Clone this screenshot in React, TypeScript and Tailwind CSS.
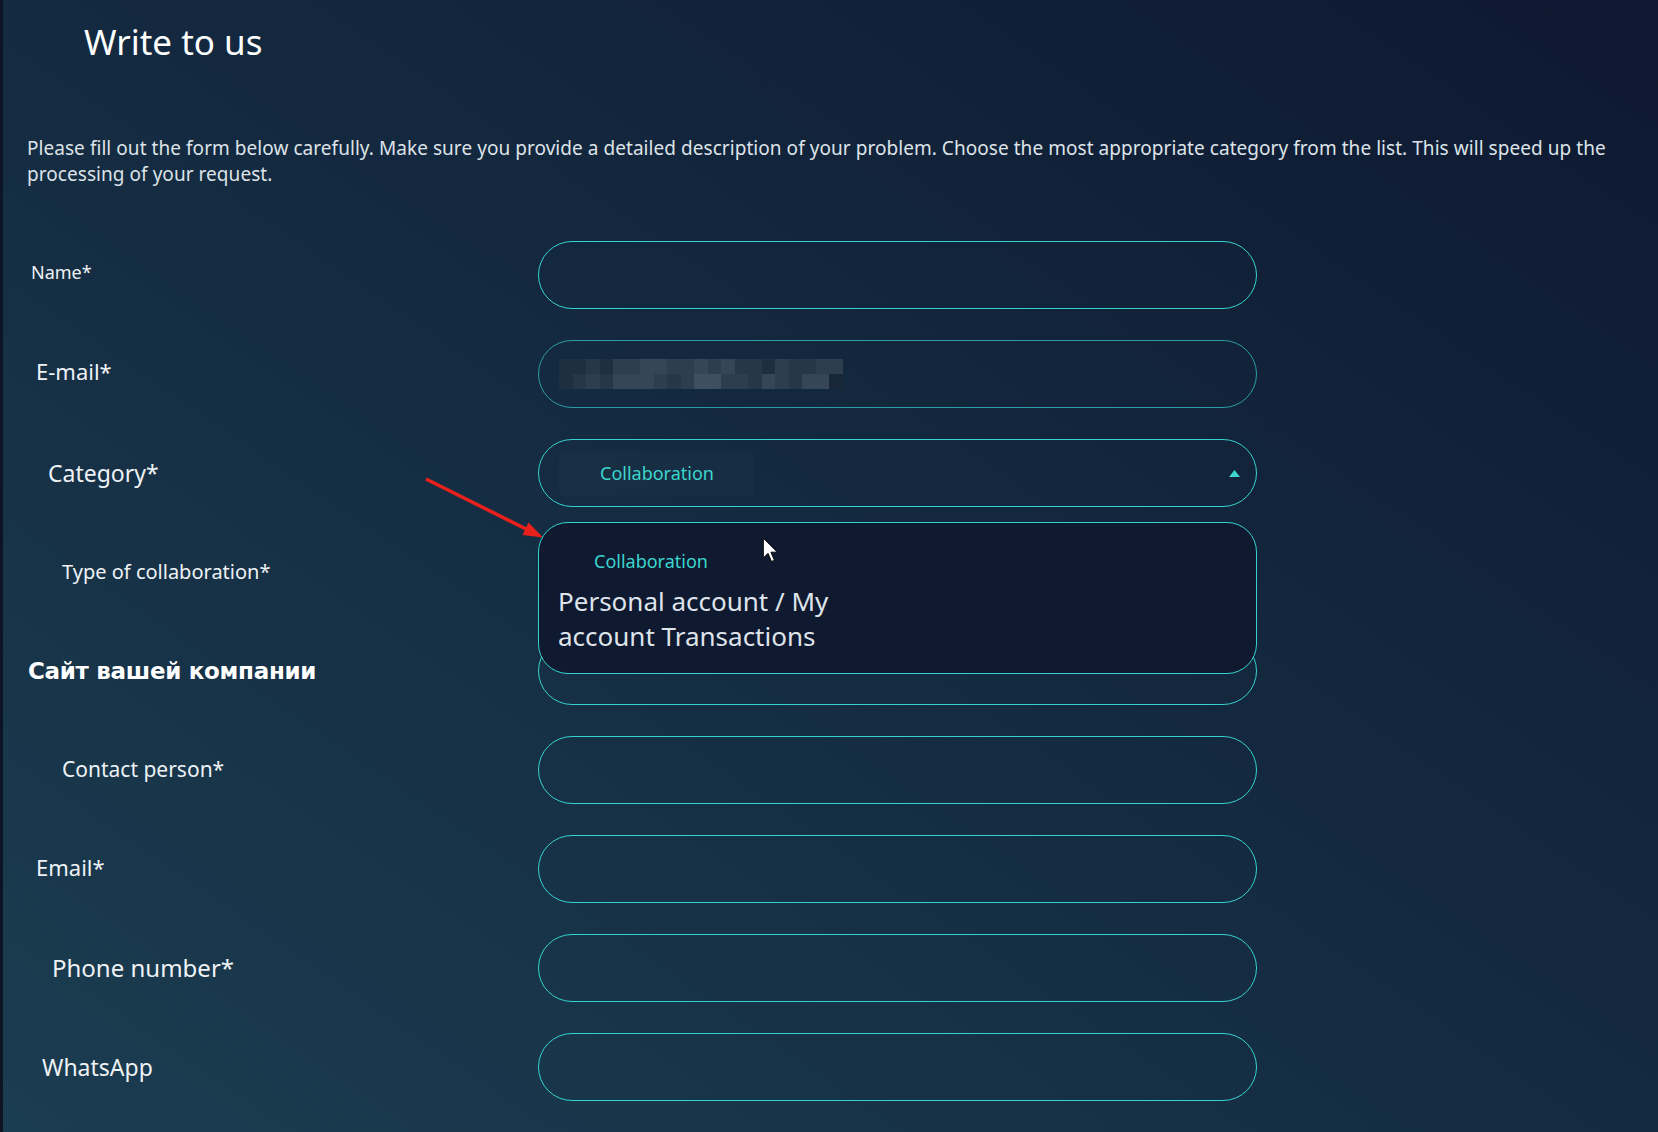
import React from 'react';

type Row = { label: string; cls: string; kind?: 'email' | 'select' };

const rows: Row[] = [
  { label: 'Name*', cls: 'pl-[28px] pb-[6px] text-[18px]' },
  { label: 'E-mail*', cls: 'pl-[33px] pb-[6px] text-[22px]', kind: 'email' },
  { label: 'Category*', cls: 'pl-[45px] text-[23px]', kind: 'select' },
  { label: 'Type of collaboration*', cls: 'pl-[59px] text-[20px]' },
  { label: 'Сайт вашей компании', cls: "pl-[25px] text-[23px] font-bold font-['DejaVu_Sans',sans-serif] tracking-[-0.3px] text-white" },
  { label: 'Contact person*', cls: 'pl-[59px] text-[21px]' },
  { label: 'Email*', cls: 'pl-[33px] pb-[3px] text-[22px]' },
  { label: 'Phone number*', cls: 'pl-[49px] text-[24px]' },
  { label: 'WhatsApp', cls: 'pl-[39px] text-[23px]' },
];

// pixelated (blurred) e-mail value
const shades = ['bg-[#182839]', 'bg-[#1f2f42]', 'bg-[#26374a]', 'bg-[#2d3e51]', 'bg-[#354659]', 'bg-[#3e4f61]'];
const mosaic = [
  [1, 1, 2, 1, 3, 3, 4, 4, 3, 3, 4, 3, 4, 2, 2, 1, 3, 2, 2, 3, 3],
  [1, 2, 3, 2, 4, 4, 4, 3, 2, 3, 5, 5, 3, 3, 2, 4, 3, 2, 4, 4, 0],
];

const BlurredEmail = () => (
  <div className="flex flex-col">
    {mosaic.map((r, i) => (
      <div key={i} className="flex">
        {r.map((s, j) => (
          <div key={j} className={`h-[15px] w-[13.5px] ${shades[s]}`} />
        ))}
      </div>
    ))}
  </div>
);

const Field = ({ kind }: { kind?: Row['kind'] }) => {
  if (kind === 'email') {
    return (
      <div className="flex h-[68px] w-[719px] items-center rounded-[34px] border border-[#2a9ea3] pl-[20px]">
        <BlurredEmail />
      </div>
    );
  }
  if (kind === 'select') {
    return (
      <div className="relative w-[719px]">
        <div className="flex h-[68px] items-center justify-between rounded-[34px] border border-[#35d3cf] pl-[20px] pr-[16px]">
          <div className="flex h-[44px] items-center rounded bg-white/[0.015] pl-[41px] pr-[40px] text-[18px] text-[#3cd6cd]">
            Collaboration
          </div>
          <svg width="11" height="7" viewBox="0 0 11 7">
            <path d="M0 7 L5.5 0 L11 7 Z" fill="#3cd6cd" />
          </svg>
        </div>
        <div className="absolute left-0 top-[83px] z-10 h-[152px] w-full rounded-[30px] border border-[#35d3cf] bg-[#0f1930] pl-[19px] pt-[25px]">
          <div className="pl-[36px] text-[18px] leading-[26px] text-[#3cd6cd]">Collaboration</div>
          <div className="mt-[10px] max-w-[310px] text-[26px] leading-[35px] text-[#dfe4ea]">
            Personal account / My account Transactions
          </div>
        </div>
      </div>
    );
  }
  return <div className="h-[68px] w-[719px] rounded-[34px] border border-[#35d3cf]" />;
};

export default function App() {
  return (
    <div className="relative h-[1132px] w-full overflow-hidden border-l-[3px] border-[#0c1426] bg-[linear-gradient(to_top_right,#1b3d51_0%,#142a40_50%,#0e1830_100%)] font-['Noto_Sans','Open_Sans',sans-serif] text-[#e9edf1]">
      <h1 className="pl-[81px] pt-[20px] text-[35px] font-normal leading-[44px] text-white">Write to us</h1>
      <p className="mt-[71px] pl-[24px] pr-[30px] text-[19px] leading-[26px] tracking-[0.05px] text-[#dde3e8]">
        Please fill out the form below carefully. Make sure you provide a detailed description of your problem. Choose the most appropriate category from the list. This will speed up the processing of your request.
      </p>

      <div className="mt-[54px] flex flex-col gap-[31px]">
        {rows.map((r) => (
          <div key={r.label} className="flex h-[68px] items-center">
            <div className={`w-[535px] text-[#eef2f5] ${r.cls}`}>{r.label}</div>
            <Field kind={r.kind} />
          </div>
        ))}
      </div>

      {/* annotation arrow */}
      <svg className="absolute left-[415px] top-[470px]" width="130" height="75" viewBox="0 0 130 75">
        <line x1="8" y1="9" x2="108" y2="59" stroke="#e8211c" strokeWidth="3.5" />
        <path d="M125 67.5 L104.5 65 L110.5 52.5 Z" fill="#e8211c" />
      </svg>

      {/* mouse cursor */}
      <svg className="absolute left-[759px] top-[537px] z-20" width="19" height="28" viewBox="0 0 16 24">
        <path d="M1 1 L1 18 L5 14 L8 21 L10.5 20 L7.5 13 L13 13 Z" fill="#fff" stroke="#000" strokeWidth="0.8" />
      </svg>
    </div>
  );
}
